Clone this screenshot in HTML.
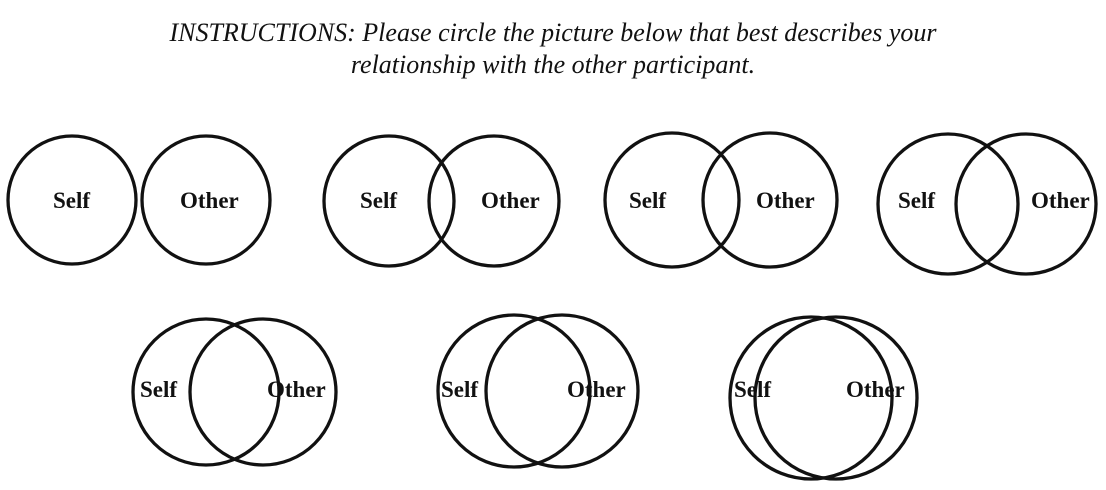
<!DOCTYPE html>
<html><head><meta charset="utf-8"><style>
html,body{margin:0;padding:0;background:#fff;width:1106px;height:490px;overflow:hidden}
.t{position:absolute;left:0;width:1106px;text-align:center;font-family:"Liberation Serif","Times New Roman",serif;font-style:italic;font-size:26px;color:#111;line-height:32px}
svg{position:absolute;left:0;top:0}
svg text{font-family:"Liberation Serif","Times New Roman",serif;font-weight:bold;font-size:23px;fill:#111}
</style></head><body>
<div class="t" style="top:17px">INSTRUCTIONS: Please circle the picture below that best describes your<br>relationship with the other participant.</div>
<svg width="1106" height="490" fill="none" stroke="#111" stroke-width="3.3">
<circle cx="72" cy="200" r="64"/><circle cx="206" cy="200" r="64"/>
<circle cx="389" cy="201" r="65"/><circle cx="494" cy="201" r="65"/>
<circle cx="672" cy="200" r="67"/><circle cx="770" cy="200" r="67"/>
<circle cx="948" cy="204" r="70"/><circle cx="1026" cy="204" r="70"/>
<circle cx="206" cy="392" r="73"/><circle cx="263" cy="392" r="73"/>
<circle cx="514" cy="391" r="76"/><circle cx="562" cy="391" r="76"/>
<circle cx="811" cy="398" r="81"/><circle cx="836" cy="398" r="81"/>
<g stroke="none">
<text x="53" y="208">Self</text><text x="180" y="208">Other</text>
<text x="360" y="208">Self</text><text x="481" y="208">Other</text>
<text x="629" y="208">Self</text><text x="756" y="208">Other</text>
<text x="898" y="208">Self</text><text x="1031" y="208">Other</text>
<text x="140" y="397">Self</text><text x="267" y="397">Other</text>
<text x="441" y="397">Self</text><text x="567" y="397">Other</text>
<text x="734" y="397">Self</text><text x="846" y="397">Other</text>
</g>
</svg>
</body></html>
